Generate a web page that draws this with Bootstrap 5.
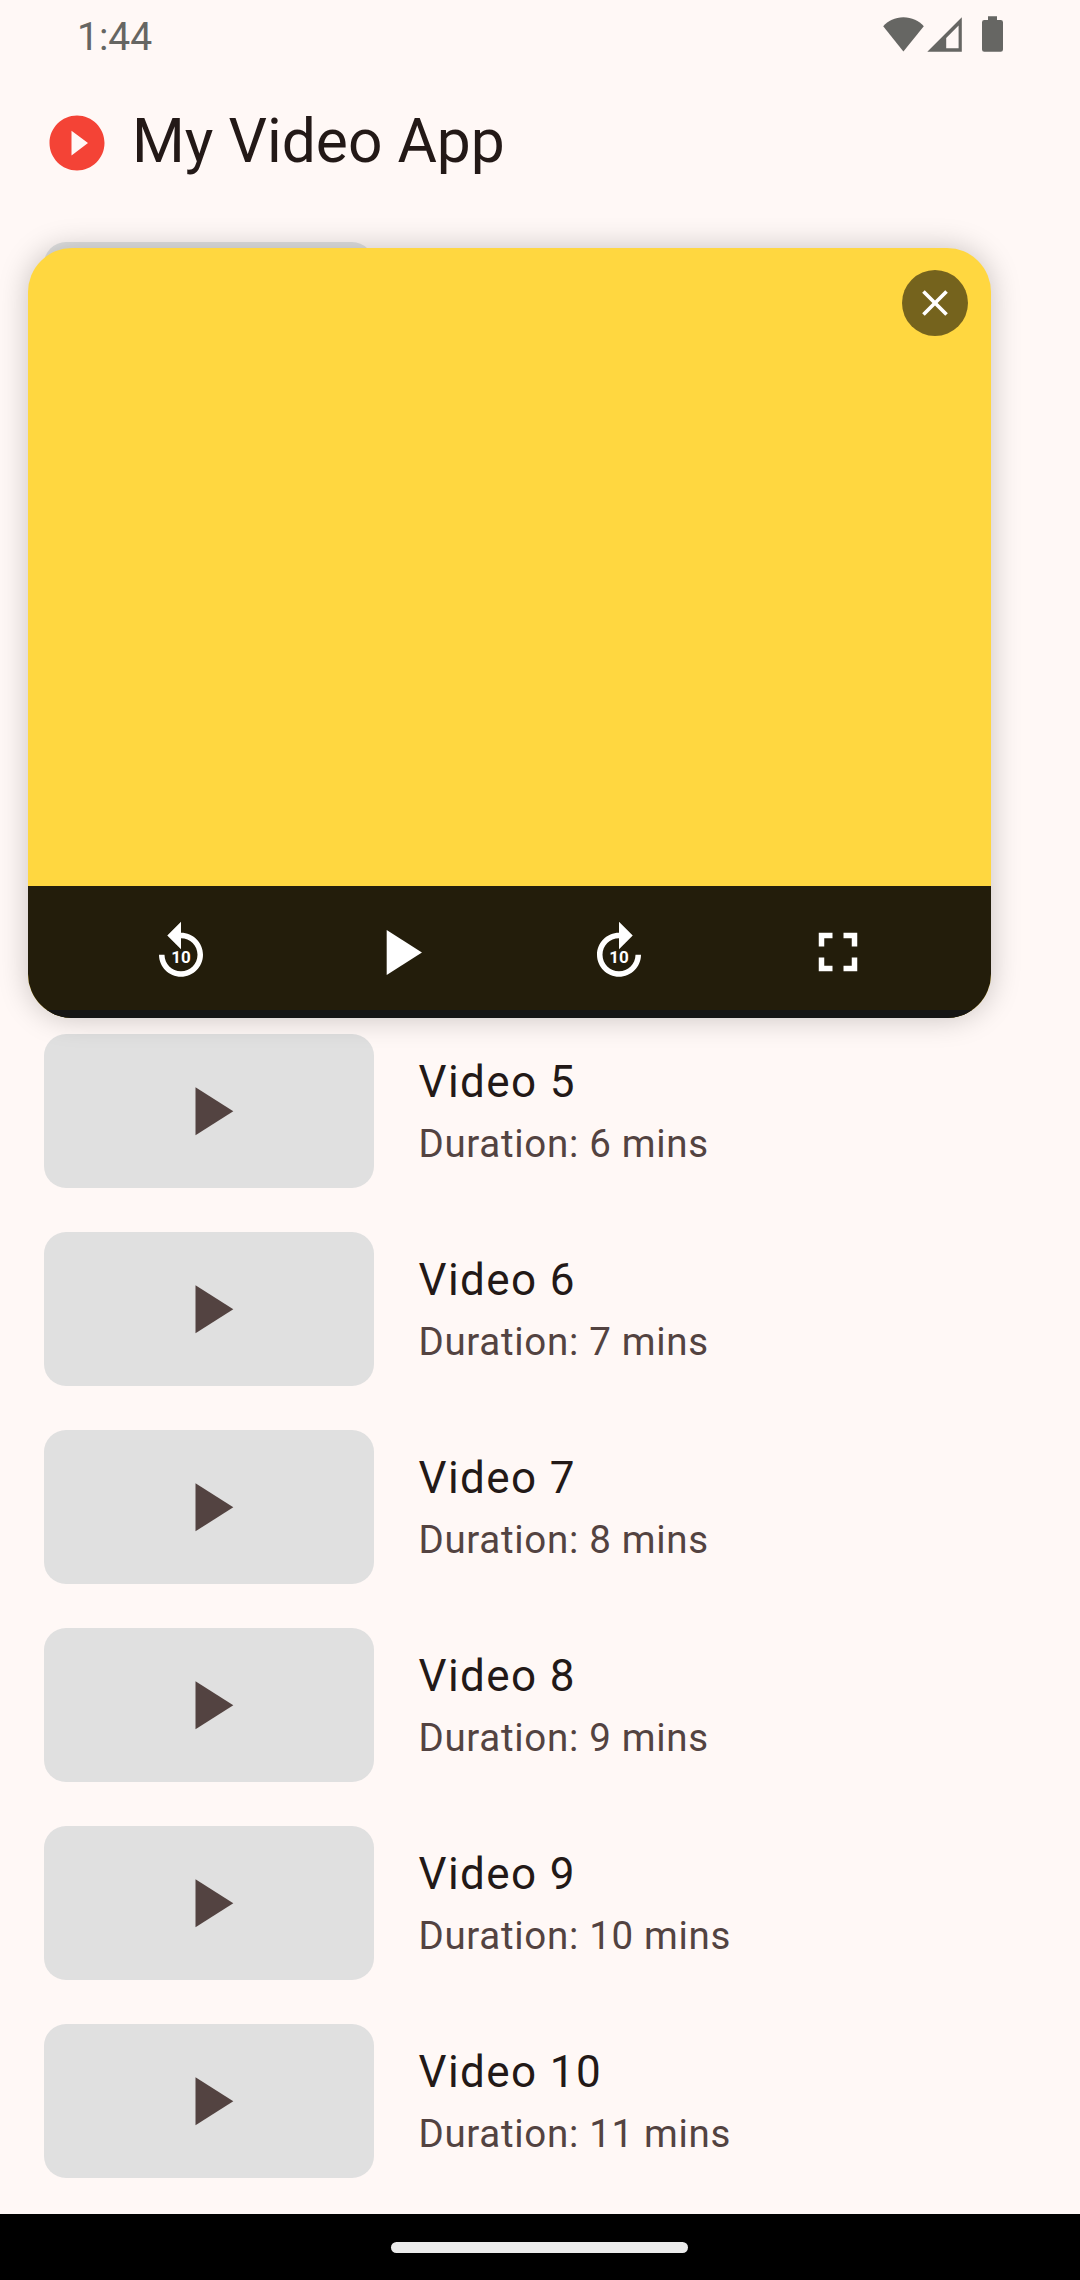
<!DOCTYPE html>
<html lang="en">
<head>
<meta charset="utf-8">
<meta name="viewport" content="width=device-width, initial-scale=1">
<title>My Video App</title>
<link href="https://cdn.jsdelivr.net/npm/bootstrap@5.3.0/dist/css/bootstrap.min.css" rel="stylesheet">
<style>
  body { background: #fff8f6; color: #231917; font-family: Roboto, sans-serif; }
  svg { display: block; fill: currentColor; flex-shrink: 0; }
  .screen { width: 1080px; height: 2280px; }
  .status-bar { height: 66px; padding: 6px 76px 0 77px; color: #666663; }
  .clock { font-size: 39px; line-height: 62px; }
  .status-icons { margin-top: 9px; }
  .app-bar { height: 154px; padding-left: 44px; gap: 22px; }
  .app-title { font-size: 60.5px; line-height: 77px; font-weight: 400; padding-bottom: 3px; }
  .app-logo { color: #f44336; }
  .video-row { height: 198px; padding: 22px 44px; gap: 44px; }
  .thumb { width: 330px; height: 154px; border-radius: 22px; background: #e0e0e0; color: #534341; padding-bottom: .5px; }
  .video-name { font-size: 44px; line-height: 66px; letter-spacing: 1.4px; color: #231917; }
  .video-time { font-size: 38.5px; line-height: 58px; letter-spacing: .6875px; color: #534341; }
  .video-text { padding: 0 0 1px .5px; }
  .player { left: 28px; top: 248px; width: 962.5px; height: 770px; border-radius: 44px; background: #ffd740; box-shadow: 0 0 30px rgba(0,0,0,.22); }
  .player-top { height: 638px; padding: 22px 22.5px 22px 22px; }
  .close-btn { width: 66px; height: 66px; background: rgba(0,0,0,.54); }
  .controls { height: 132px; background: #231d0b; }
  .control-btn { width: 132px; height: 132px; }
  .control-btn text { font: 700 6.2px Roboto, sans-serif; text-anchor: middle; }
  .progress-line { height: 8px; background: #151515; }
  .nav-area { height: 66px; background: #000; padding: 1px 2px 0 0; }
  .nav-handle { width: 297px; height: 11.5px; background: #ebebeb; }
</style>
</head>
<body>
<svg width="0" height="0" class="position-absolute" aria-hidden="true">
  <symbol id="play" viewBox="0 0 24 24"><path d="M8 5v14l11-7z"/></symbol>
</svg>
<div class="screen position-relative overflow-hidden d-flex flex-column">
  <div class="status-bar d-flex justify-content-between align-items-start">
    <span class="clock">1:44</span>
    <svg class="status-icons" width="121" height="38" viewBox="883 15 121 38">
      <path d="M883.2 26.3C888 21 895 17.3 903.4 17.3s15.6 3.7 20.4 9L903.4 51.4z"/>
      <path fill-rule="evenodd" d="M927.3 51.8L961.8 17.3V51.8zM946.2 48.2H958.6V25.6L946.2 38z"/>
      <path d="M988 16.2h9V20h3.7q2.3 0 2.3 2.3v27.2q0 2.2-2.3 2.2h-16.4q-2.3 0-2.3-2.2V22.3q0-2.3 2.3-2.3h3.7z"/>
    </svg>
  </div>
  <header class="app-bar d-flex align-items-center">
    <svg class="app-logo" width="66" height="66" viewBox="0 0 24 24"><path d="M12 2C6.48 2 2 6.48 2 12s4.48 10 10 10 10-4.48 10-10S17.52 2 12 2zm-2 14.5v-9l6 4.5-6 4.5z"/></svg>
    <h1 class="app-title m-0">My Video App</h1>
  </header>
  <main class="flex-grow-1">
    <!-- The first four rows sit under the player, so only their thumbnails are filled in -->
    <div class="video-row d-flex align-items-center"><div class="thumb"></div></div>
    <div class="video-row d-flex align-items-center"><div class="thumb"></div></div>
    <div class="video-row d-flex align-items-center"><div class="thumb"></div></div>
    <div class="video-row d-flex align-items-center"><div class="thumb"></div></div>
    <div class="video-row d-flex align-items-center"><div class="thumb d-flex align-items-center justify-content-center"><svg width="82.5" height="82.5"><use href="#play"/></svg></div><div class="video-text"><div class="video-name">Video 5</div><div class="video-time">Duration: 6 mins</div></div></div>
    <div class="video-row d-flex align-items-center"><div class="thumb d-flex align-items-center justify-content-center"><svg width="82.5" height="82.5"><use href="#play"/></svg></div><div class="video-text"><div class="video-name">Video 6</div><div class="video-time">Duration: 7 mins</div></div></div>
    <div class="video-row d-flex align-items-center"><div class="thumb d-flex align-items-center justify-content-center"><svg width="82.5" height="82.5"><use href="#play"/></svg></div><div class="video-text"><div class="video-name">Video 7</div><div class="video-time">Duration: 8 mins</div></div></div>
    <div class="video-row d-flex align-items-center"><div class="thumb d-flex align-items-center justify-content-center"><svg width="82.5" height="82.5"><use href="#play"/></svg></div><div class="video-text"><div class="video-name">Video 8</div><div class="video-time">Duration: 9 mins</div></div></div>
    <div class="video-row d-flex align-items-center"><div class="thumb d-flex align-items-center justify-content-center"><svg width="82.5" height="82.5"><use href="#play"/></svg></div><div class="video-text"><div class="video-name">Video 9</div><div class="video-time">Duration: 10 mins</div></div></div>
    <div class="video-row d-flex align-items-center"><div class="thumb d-flex align-items-center justify-content-center"><svg width="82.5" height="82.5"><use href="#play"/></svg></div><div class="video-text"><div class="video-name">Video 10</div><div class="video-time">Duration: 11 mins</div></div></div>
  </main>
  <footer class="nav-area d-flex align-items-center justify-content-center"><div class="nav-handle rounded-pill"></div></footer>

  <!-- Floating mini player over the list -->
  <section class="player position-absolute overflow-hidden d-flex flex-column">
    <div class="player-top d-flex justify-content-end align-items-start">
      <button class="close-btn btn rounded-circle border-0 p-0 text-white d-flex align-items-center justify-content-center" aria-label="Close">
        <svg width="44" height="44" viewBox="0 0 24 24"><path d="M19 6.41L17.59 5 12 10.59 6.41 5 5 6.41 10.59 12 5 17.59 6.41 19 12 13.41 17.59 19 19 17.59 13.41 12z"/></svg>
      </button>
    </div>
    <div class="controls d-flex justify-content-evenly text-white">
      <button class="control-btn btn border-0 p-0 text-white d-flex align-items-center justify-content-center" aria-label="Back 10 seconds">
        <svg width="66" height="66" viewBox="0 0 24 24"><path d="M12 5V1L7 6l5 5V7c3.31 0 6 2.69 6 6s-2.69 6-6 6-6-2.69-6-6H4c0 4.42 3.58 8 8 8s8-3.58 8-8-3.58-8-8-8z"/><text x="12" y="16.1">10</text></svg>
      </button>
      <button class="control-btn btn border-0 p-0 text-white d-flex align-items-center justify-content-center" aria-label="Play">
        <svg width="77" height="77"><use href="#play"/></svg>
      </button>
      <button class="control-btn btn border-0 p-0 text-white d-flex align-items-center justify-content-center" aria-label="Forward 10 seconds">
        <svg width="66" height="66" viewBox="0 0 24 24"><path d="M12 5V1l5 5-5 5V7c-3.31 0-6 2.69-6 6s2.69 6 6 6 6-2.69 6-6h2c0 4.42-3.58 8-8 8s-8-3.58-8-8 3.58-8 8-8z"/><text x="12" y="16.1">10</text></svg>
      </button>
      <button class="control-btn btn border-0 p-0 text-white d-flex align-items-center justify-content-center" aria-label="Full screen">
        <svg width="66" height="66" viewBox="0 0 24 24"><path d="M7 14H5v5h5v-2H7v-3zM5 10h2V7h3V5H5v5zm12 7h-3v2h5v-5h-2v3zM14 5v2h3v3h2V5h-5z"/></svg>
      </button>
    </div>
    <div class="progress-line position-absolute bottom-0 start-0 w-100"></div>
  </section>
</div>
<script src="https://cdn.jsdelivr.net/npm/bootstrap@5.3.0/dist/js/bootstrap.bundle.min.js"></script>
</body>
</html>
